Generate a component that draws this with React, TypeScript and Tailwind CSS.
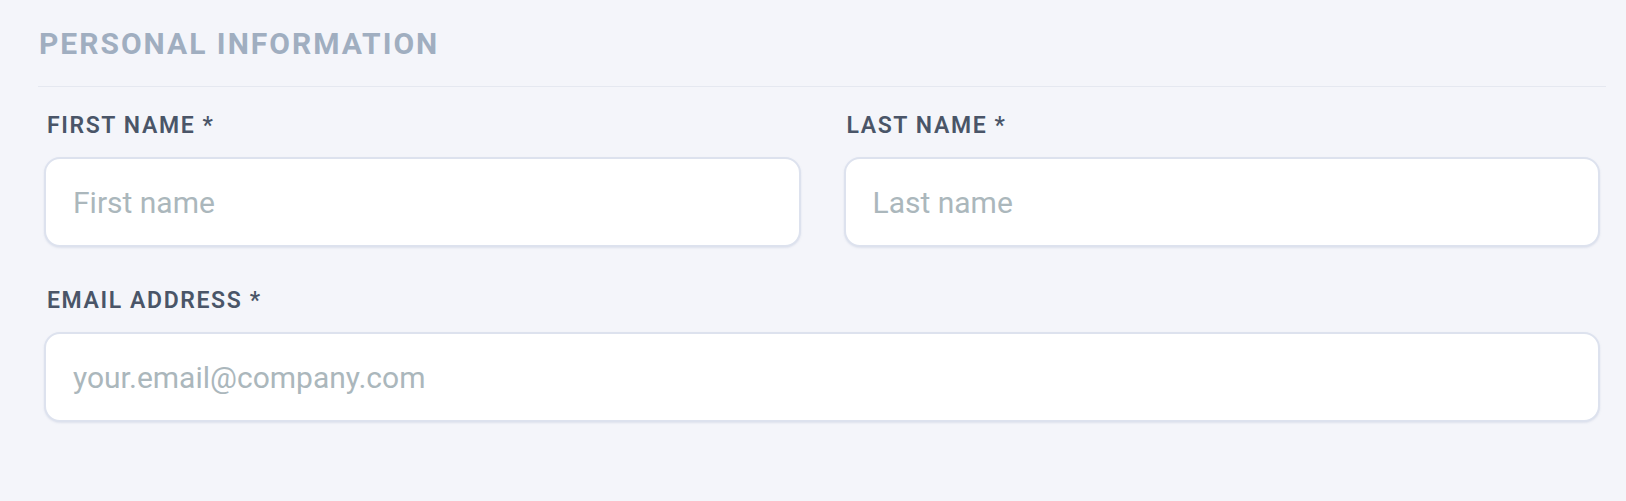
import React from 'react';

const Field = ({ label, placeholder, type = 'text' }: { label: string; placeholder: string; type?: string }) => (
  <div className="flex flex-col">
    <label className="text-[23px] leading-[32px] font-semibold tracking-[0.07em] text-[#4a5568] pl-[3px]">
      {label} *
    </label>
    <input
      type={type}
      placeholder={placeholder}
      className="mt-[15px] h-[90px] w-full rounded-[16px] border-2 border-[#dde2ee] bg-white px-[27px] text-[30px] text-[#2d3748] placeholder:text-[#abb7bc] outline-none shadow-[0_1px_2px_rgba(160,170,200,0.25)]"
    />
  </div>
);

export default function App() {
  return (
    <div className="min-h-screen w-full bg-[#f4f5fa] pl-[38px] pr-[20px] pt-[26px]" style={{ fontFamily: 'Roboto, "Liberation Sans", sans-serif' }}>
      <h2 className="text-[30px] leading-[36px] font-bold tracking-[2px] text-[#a0aec0] pl-[1px]">
        PERSONAL INFORMATION
      </h2>
      <div className="mt-[24px] h-px w-full bg-[#e5e8f0]" />

      <div className="px-[6px] mt-[23px]">
        <div className="grid grid-cols-2 gap-x-[43px]">
          <Field label="FIRST NAME" placeholder="First name" />
          <Field label="LAST NAME" placeholder="Last name" />
        </div>
        <div className="mt-[38px]">
          <Field label="EMAIL ADDRESS" placeholder="your.email@company.com" type="email" />
        </div>
      </div>
    </div>
  );
}
